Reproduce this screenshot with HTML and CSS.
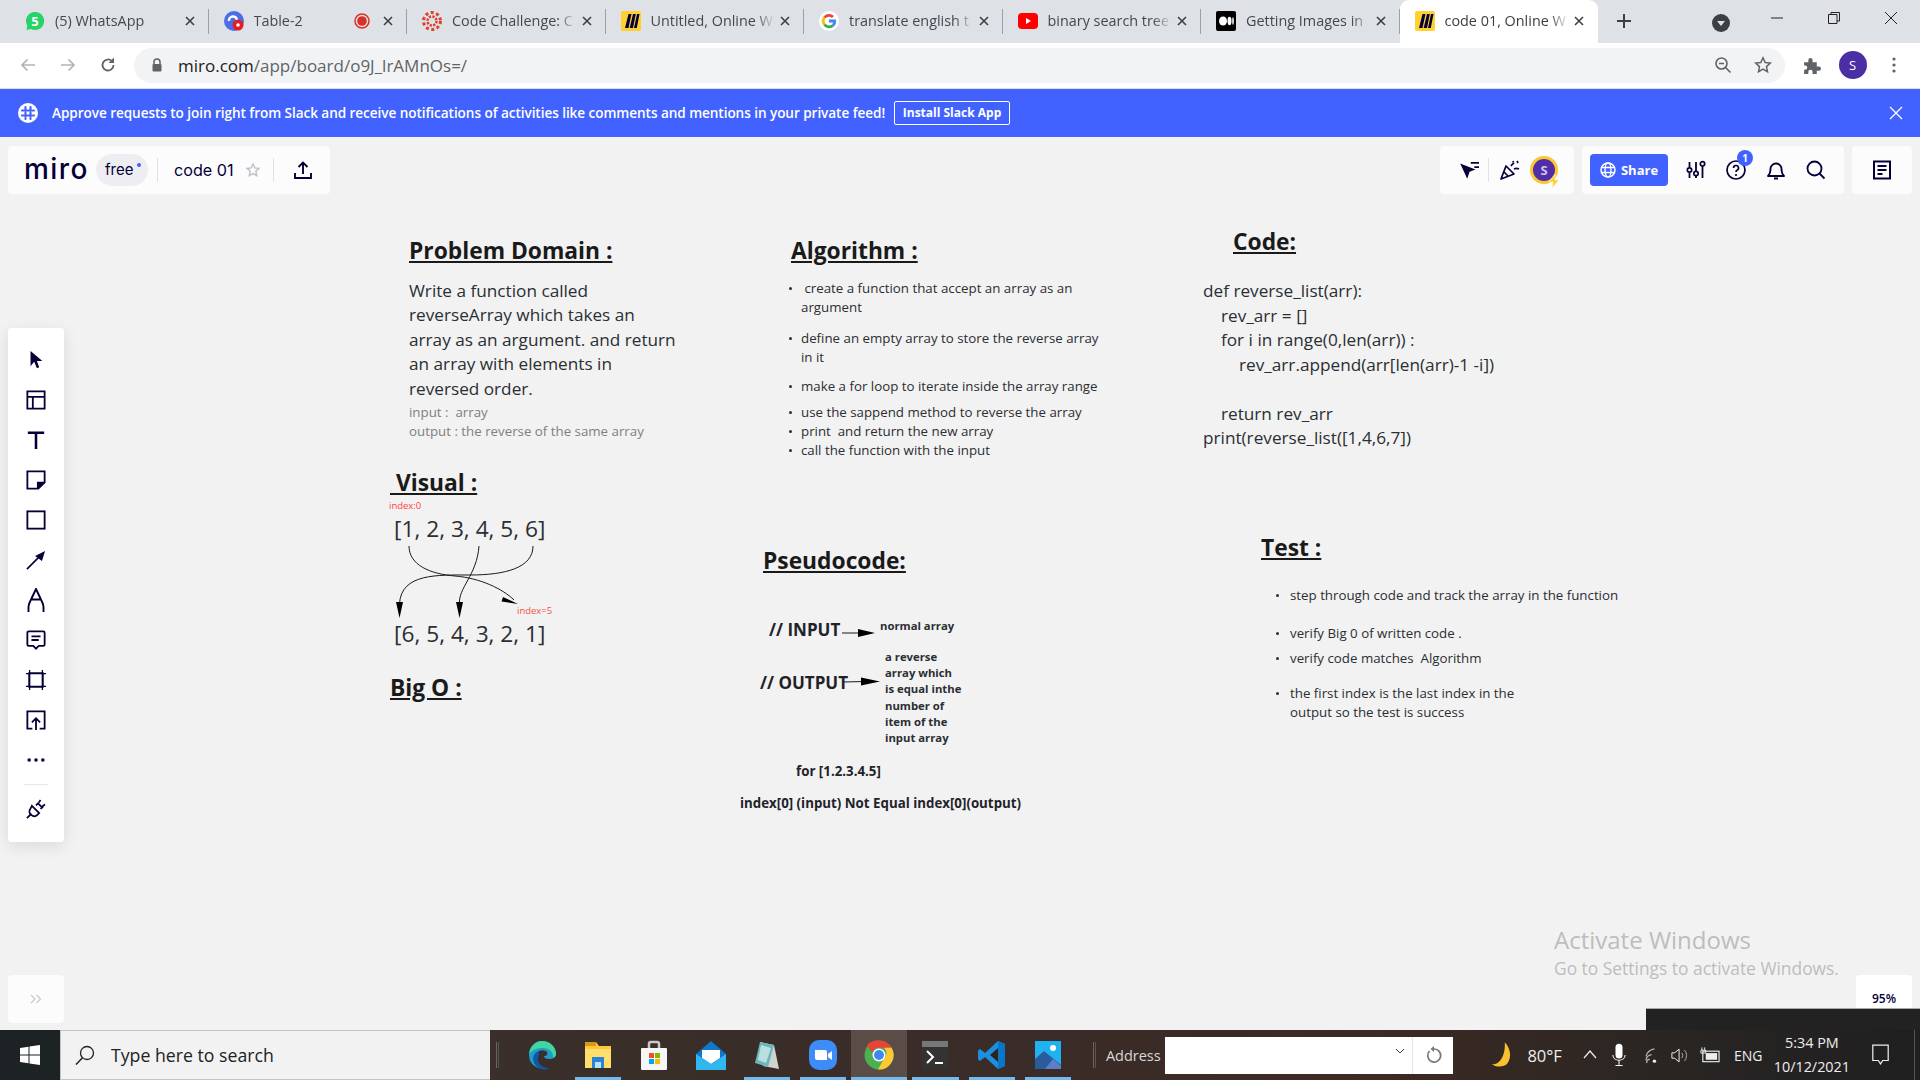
FILE: index.html
```html
<!DOCTYPE html>
<html lang="en">
<head>
<meta charset="utf-8">
<title>code 01, Online Whiteboard</title>
<link rel="stylesheet" href="styles.css">
</head>
<body>
<svg class="defs" width="0" height="0" aria-hidden="true">
  <symbol id="x" viewBox="0 0 12 12"><path d="M2 2l8 8M10 2l-8 8" fill="none" stroke="#3c4043" stroke-width="1.600"/></symbol>
  <symbol id="miro" viewBox="0 0 20 20"><rect width="20" height="20" rx="2" fill="#ffd02f"/><path d="M7.500 3h3L7.500 17H4zM12 3h2.800L12 17H8.700zM16 3h2.500L15.800 17h-2.800z" fill="#050038"/></symbol>
</svg>

<div class="page">
  <header class="tabstrip">
    <div class="tab">
      <svg class="favicon" viewBox="0 0 20 20"><path d="M10 1a9 9 0 0 0-7.700 13.600L1.500 19l4.500-1A9 9 0 1 0 10 1z" fill="#25d366"/><text x="10" y="14.500" text-anchor="middle" class="fav5">5</text></svg>
      <span class="tab-title">(5) WhatsApp</span>
      <svg class="tab-x"><use href="#x"/></svg>
    </div>
    <div class="tab">
      <svg class="favicon" viewBox="0 0 20 20"><circle cx="10" cy="10" r="10" fill="#4b6ee8"/><path d="M5 10a4 4 0 0 1 8-1" fill="none" stroke="#fff" stroke-width="2.500"/><circle cx="14" cy="14" r="5.500" fill="#e51c23"/><circle cx="14" cy="14" r="1.800" fill="#fff"/></svg>
      <span class="tab-title">Table-2</span>
      <svg class="tab-rec" viewBox="0 0 16 16"><circle cx="8" cy="8" r="7" fill="none" stroke="#d93025" stroke-width="1.500"/><circle cx="8" cy="8" r="4.800" fill="#d93025"/></svg>
      <svg class="tab-x"><use href="#x"/></svg>
    </div>
    <div class="tab">
      <svg class="favicon" viewBox="0 0 20 20"><circle cx="10" cy="10" r="4.500" fill="none" stroke="#e13f2b" stroke-width="2.500" stroke-dasharray="2.200 1.300"/><circle cx="10" cy="10" r="8.500" fill="none" stroke="#e13f2b" stroke-width="3" stroke-dasharray="3 2.500"/></svg>
      <span class="tab-title">Code Challenge: C</span>
      <svg class="tab-x"><use href="#x"/></svg>
    </div>
    <div class="tab">
      <svg class="favicon"><use href="#miro"/></svg>
      <span class="tab-title">Untitled, Online W</span>
      <svg class="tab-x"><use href="#x"/></svg>
    </div>
    <div class="tab">
      <svg class="favicon" viewBox="0 0 20 20"><circle cx="10" cy="10" r="10" fill="#fff"/><path d="M5.500 6.500A5.700 5.700 0 0 1 14 6" fill="none" stroke="#ea4335" stroke-width="2.800"/><path d="M5.500 6.500a5.700 5.700 0 0 0 0 7" fill="none" stroke="#fbbc05" stroke-width="2.800"/><path d="M5.500 13.500A5.700 5.700 0 0 0 14 14.500" fill="none" stroke="#34a853" stroke-width="2.800"/><path d="M10 10h5.700A5.700 5.700 0 0 1 14 14.500" fill="none" stroke="#4285f4" stroke-width="2.800"/></svg>
      <span class="tab-title">translate english t</span>
      <svg class="tab-x"><use href="#x"/></svg>
    </div>
    <div class="tab">
      <svg class="favicon" viewBox="0 0 20 20"><rect y="2" width="20" height="16" rx="4" fill="#f00"/><path d="M8 7l5 3-5 3z" fill="#fff"/></svg>
      <span class="tab-title">binary search tree</span>
      <svg class="tab-x"><use href="#x"/></svg>
    </div>
    <div class="tab">
      <svg class="favicon" viewBox="0 0 20 20"><rect width="20" height="20" rx="2" fill="#000"/><ellipse cx="7" cy="10" rx="4" ry="4.500" fill="#fff"/><ellipse cx="13.500" cy="10" rx="2" ry="4.200" fill="#fff"/><ellipse cx="17" cy="10" rx=".8" ry="3.800" fill="#fff"/></svg>
      <span class="tab-title">Getting Images in</span>
      <svg class="tab-x"><use href="#x"/></svg>
    </div>
    <div class="tab tab-active">
      <svg class="favicon"><use href="#miro"/></svg>
      <span class="tab-title">code 01, Online W</span>
      <svg class="tab-x"><use href="#x"/></svg>
    </div>
    <svg class="newtab" viewBox="0 0 16 16"><path d="M8 1v14M1 8h14" stroke="#3c4043" stroke-width="2"/></svg>
    <div class="winctl">
      <svg class="tabsearch" viewBox="0 0 18 18"><circle cx="9" cy="9" r="9" fill="#3c4043"/><path d="M5 7h8l-4 5z" fill="#dee1e6"/></svg>
      <svg class="wc" viewBox="0 0 14 14"><path d="M1 7h12" stroke="#222" stroke-width="1"/></svg>
      <svg class="wc" viewBox="0 0 14 14"><path d="M1.500 3.500h8.500v9H1.500zM4 3.500V1.500h8.500v8.500H10" fill="none" stroke="#222" stroke-width="1"/></svg>
      <svg class="wc" viewBox="0 0 14 14"><path d="M1 1l12 12M13 1L1 13" stroke="#222" stroke-width="1"/></svg>
    </div>
  </header>

  <nav class="toolbar">
    <svg class="nav-ico" viewBox="0 0 18 18"><path d="M16 9H3M8.500 3.500L3 9l5.500 5.500" fill="none" stroke="#b0b3b8" stroke-width="1.700"/></svg>
    <svg class="nav-ico" viewBox="0 0 18 18"><path d="M2 9h13M9.500 3.500L15 9l-5.500 5.500" fill="none" stroke="#b0b3b8" stroke-width="1.700"/></svg>
    <svg class="nav-ico" viewBox="0 0 18 18"><path d="M14.500 9a5.500 5.500 0 1 1-1.600-3.900" fill="none" stroke="#5f6368" stroke-width="1.800"/><path d="M15 1.500V7H9.500z" fill="#5f6368"/></svg>
    <div class="omnibox">
      <svg class="lock" viewBox="0 0 12 14"><path d="M3 6V4a3 3 0 0 1 6 0v2" fill="none" stroke="#5f6368" stroke-width="1.500"/><rect x="1.500" y="6" width="9" height="7.500" rx="1" fill="#5f6368"/></svg>
      <span class="url">miro.com<span class="url-dim">/app/board/o9J_lrAMnOs=/</span></span>
      <svg class="omni-ico" viewBox="0 0 18 18"><circle cx="7.500" cy="7.500" r="5.500" fill="none" stroke="#5f6368" stroke-width="1.600"/><path d="M5 7.500h5M11.500 11.500l5 5" stroke="#5f6368" stroke-width="1.600"/></svg>
      <svg class="omni-ico" viewBox="0 0 18 18"><path d="M9 1.800l2.200 4.700 5.100.6-3.800 3.500 1 5.100L9 13.200l-4.500 2.500 1-5.100L1.700 7.100l5.100-.6z" fill="none" stroke="#5f6368" stroke-width="1.500"/></svg>
    </div>
    <svg class="puzzle" viewBox="0 0 18 18"><path d="M2 6h4V4a2 2 0 0 1 4 0v2h4v4h2a2 2 0 0 1 0 4h-2v3H10v-2a2 2 0 0 0-4 0v2H2v-4h1a2 2 0 0 0 0-4H2z" fill="#5f6368"/></svg>
    <span class="chrome-avatar">S</span>
    <svg class="kebab" viewBox="0 0 4 16"><circle cx="2" cy="2" r="1.600" fill="#5f6368"/><circle cx="2" cy="8" r="1.600" fill="#5f6368"/><circle cx="2" cy="14" r="1.600" fill="#5f6368"/></svg>
  </nav>

  <div class="banner">
    <svg class="slack" viewBox="0 0 20 20"><circle cx="10" cy="10" r="10" fill="#fff"/><path d="M7.500 4v12M12.500 4v12M4 7.500h12M4 12.500h12" stroke="#4262ff" stroke-width="2.200" stroke-linecap="round" stroke-dasharray="4 1.500"/></svg>
    <span class="banner-text">Approve requests to join right from Slack and receive notifications of activities like comments and mentions in your private feed!</span>
    <span class="banner-btn">Install Slack App</span>
    <svg class="banner-x" viewBox="0 0 14 14"><path d="M1 1l12 12M13 1L1 13" stroke="#fff" stroke-width="1.300"/></svg>
  </div>

  <main class="board">
    <section class="note n-problem">
      <h2 class="h">Problem Domain :</h2>
      <p class="big">Write a function called<br>reverseArray which takes an<br>array as an argument. and return<br>an array with elements in<br>reversed order.</p>
      <p class="muted">input :&nbsp; array<br>output : the reverse of the same array</p>
    </section>

    <h2 class="note h n-visual">&nbsp;Visual :</h2>
    <span class="note red n-i0">index:0</span>
    <span class="note arr n-a1">[1, 2, 3, 4, 5, 6]</span>
    <span class="note arr n-a2">[6, 5, 4, 3, 2, 1]</span>
    <span class="note red n-i5">index=5</span>
    <h2 class="note h n-bigo">Big O :</h2>

    <svg class="connectors" viewBox="0 137 1920 893">
      <g fill="none" stroke="#1a1a1a" stroke-width="1">
        <path d="M409 546C409 565 430 574 455 576C480 578 503 589 514 600"/>
        <path d="M533 546C533 568 505 575 470 575C438 575 401 573 399.500 604"/>
        <path d="M479 546C477 575 458 588 459.500 604"/>
        <path d="M842 633H862"/>
        <path d="M843 682L865 681.500"/>
      </g>
      <g fill="#000">
        <path d="M396 602h7l-3.500 16z"/>
        <path d="M456 602h7l-3.500 16z"/>
        <path d="M518 604l-15-7-1.500 4.500z"/>
        <path d="M858 629l17 4-17 4z"/>
        <path d="M861 677.500l19 4-19 4z"/>
      </g>
    </svg>

    <section class="note n-algo">
      <h2 class="h">Algorithm :</h2>
      <ul class="bul">
        <li>&nbsp;create a function that accept an array as an argument</li>
        <li class="g12">define an empty array to store the reverse array in it</li>
        <li class="g10">make a for loop to iterate inside the array range</li>
        <li class="g7">use the sappend method to reverse the array</li>
        <li>print &nbsp;and return the new array</li>
        <li>call the function with the input</li>
      </ul>
    </section>

    <section class="note n-code">
      <h2 class="h n-code-h">Code:</h2>
      <p class="big code">def reverse_list(arr):<br><span class="i1">rev_arr = []</span><br><span class="i1">for i in range(0,len(arr)) :</span><br><span class="i2">rev_arr.append(arr[len(arr)-1 -i])</span><br><br><span class="i1">return rev_arr</span><br>print(reverse_list([1,4,6,7])</p>
    </section>

    <h2 class="note h n-pseudo">Pseudocode:</h2>
    <span class="note lbl n-in">// INPUT</span>
    <span class="note lbl n-out">// OUTPUT</span>
    <span class="note tiny n-normal">normal array</span>
    <p class="note tiny n-rev">a reverse<br>array which<br>is equal inthe<br>number of<br>item of the<br>input array</p>
    <span class="note small n-for">for [1.2.3.4.5]</span>
    <span class="note small n-index">index[0] (input) Not Equal index[0](output)</span>

    <section class="note n-test">
      <h2 class="h">Test :</h2>
      <ul class="bul test">
        <li>step through code and track the array in the function</li>
        <li class="g19">verify Big 0 of written code .</li>
        <li class="g6">verify code matches &nbsp;Algorithm</li>
        <li class="g16">the first index is the last index in the<br>output so the test is success</li>
      </ul>
    </section>

    <div class="hud-top">
      <div class="panel panel-left">
        <span class="logo">miro</span>
        <span class="free">free<i class="free-dot"></i></span>
        <i class="vsep"></i>
        <span class="boardname">code 01</span>
        <svg class="star" viewBox="0 0 14 14"><path d="M7 1l1.800 3.900 4.200.5-3.100 2.900.8 4.200L7 10.500 3.300 12.500l.8-4.200L1 5.400l4.200-.5z" fill="none" stroke="#c2c2cc" stroke-width="1.500"/></svg>
        <i class="vsep"></i>
        <svg class="export" viewBox="0 0 20 20"><path d="M10 14V2.500M5.500 7L10 2.500 14.500 7M2 13v5h16v-5" fill="none" stroke="#050038" stroke-width="1.900"/></svg>
      </div>
      <div class="hud-right">
        <div class="panel panel-collab">
          <svg class="ico20" viewBox="0 1 17 17"><path d="M1 4l13 5-5 2-2 6z" fill="#050038"/><path d="M10 3.500h7M13 7h4" stroke="#050038" stroke-width="1.500"/></svg>
          <i class="vsep vsep-c"></i>
          <svg class="ico22" viewBox="0 0 22 22"><path d="M2 20L7 7l8 8z" fill="none" stroke="#050038" stroke-width="1.700" stroke-linejoin="round"/><path d="M5 13l4 4M12 7c1-2 2-2 3-3M15 10c2-1 3-1 5 0M18 2l1 2M14 2l.5 1.500" fill="none" stroke="#050038" stroke-width="1.700"/></svg>
          <span class="collab-avatar">S<svg class="bolt" viewBox="0 0 12 14"><path d="M7 0L1 8h4l-1 6 7-8H7z" fill="#fcd02f" stroke="#fafafa" stroke-width=".6"/></svg></span>
        </div>
        <div class="panel panel-tools">
          <span class="share"><svg class="globe" viewBox="0 0 16 16"><circle cx="8" cy="8" r="7" fill="none" stroke="#fff" stroke-width="1.500"/><ellipse cx="8" cy="8" rx="3" ry="7" fill="none" stroke="#fff" stroke-width="1.300"/><path d="M1 5.500h14M1 10.500h14" stroke="#fff" stroke-width="1.300"/></svg>Share</span>
          <svg class="ico20 t1" viewBox="0 0 20 20"><path d="M3.500 2v5M3.500 13v5M10 2v9M10 16v2M16.500 6v12" stroke="#050038" stroke-width="1.800"/><circle cx="3.500" cy="10" r="2.200" fill="none" stroke="#050038" stroke-width="1.700"/><circle cx="10" cy="13.500" r="2.200" fill="none" stroke="#050038" stroke-width="1.700"/><circle cx="16.500" cy="3.800" r="2.200" fill="none" stroke="#050038" stroke-width="1.700"/></svg>
          <span class="help">
            <svg class="ico20" viewBox="0 0 20 20"><circle cx="10" cy="10" r="9" fill="none" stroke="#050038" stroke-width="1.700"/><path d="M7.500 8a2.500 2.500 0 1 1 3.500 2.300c-.7.4-1 .8-1 1.700" fill="none" stroke="#050038" stroke-width="1.700"/><circle cx="10" cy="15" r="1.100" fill="#050038"/></svg>
            <b class="badge">1</b>
          </span>
          <svg class="ico20" viewBox="0 0 20 20"><path d="M2 16c2-2 2.500-4 2.500-7a5.500 5.500 0 0 1 11 0c0 3 .5 5 2.500 7z" fill="none" stroke="#050038" stroke-width="1.800" stroke-linejoin="round"/><path d="M8 18.500h4" stroke="#050038" stroke-width="2"/></svg>
          <svg class="ico20" viewBox="0 0 20 20"><circle cx="8.500" cy="8.500" r="7" fill="none" stroke="#050038" stroke-width="1.800"/><path d="M13.500 13.500l5 5" stroke="#050038" stroke-width="1.800"/></svg>
        </div>
        <div class="panel panel-notes">
          <svg class="ico20" viewBox="0 0 20 20"><rect x="2" y="1.500" width="16" height="17" fill="none" stroke="#050038" stroke-width="2"/><path d="M5.500 6h9M5.500 10h9M5.500 14h5" stroke="#050038" stroke-width="1.800"/></svg>
        </div>
      </div>
    </div>

    <aside class="toolrail">
      <span class="tool"><svg viewBox="0 0 22 22"><path d="M5 1l13 11h-6l2.500 7-2.500 1-3-7-4 5z" fill="#050038"/></svg></span>
      <span class="tool"><svg viewBox="0 0 22 22"><path d="M1.500 1.500h19v19h-19zM1.500 7.500h19M7.500 7.500v13" fill="none" stroke="#050038" stroke-width="2"/></svg></span>
      <span class="tool"><svg viewBox="0 0 22 22"><path d="M2 3h18M11 3v18" fill="none" stroke="#050038" stroke-width="2.800"/></svg></span>
      <span class="tool"><svg viewBox="0 0 22 22"><path d="M1.500 1.500h19v12l-7 7h-12z" fill="none" stroke="#050038" stroke-width="2"/><path d="M20.500 13v1l-6.500 6.500h-2V13z" fill="#050038"/></svg></span>
      <span class="tool"><svg viewBox="0 0 22 22"><rect x="1.500" y="1.500" width="19" height="19" fill="none" stroke="#050038" stroke-width="2"/></svg></span>
      <span class="tool"><svg viewBox="0 0 22 22"><path d="M1 21L15 7" stroke="#050038" stroke-width="1.800"/><path d="M21 1l-3.500 11-7.500-5.500z" fill="#050038"/></svg></span>
      <span class="tool tool-tall"><svg viewBox="0 0 20 24"><path d="M2.500 24v-5c0-3 1.500-5 3-8.500L10 1l4.500 9.500c1.500 3.500 3 5.500 3 8.500v5M5 11.500h10" fill="none" stroke="#050038" stroke-width="1.900"/></svg></span>
      <span class="tool"><svg viewBox="0 0 22 22"><path d="M3 1.500h16a1.500 1.500 0 0 1 1.500 1.500v13a1.500 1.500 0 0 1-1.500 1.500h-5l-3 3-3-3H3A1.500 1.500 0 0 1 1.500 16V3A1.500 1.500 0 0 1 3 1.500z" fill="none" stroke="#050038" stroke-width="2"/><path d="M6 7h10M6 11h8" stroke="#050038" stroke-width="2"/></svg></span>
      <span class="tool"><svg viewBox="0 0 22 22"><path d="M3.500 3.500h15v15h-15z" fill="none" stroke="#050038" stroke-width="2"/><path d="M4 0v22M18 0v22M0 4h22M0 18h22" stroke="#050038" stroke-width="1.400"/></svg></span>
      <span class="tool"><svg viewBox="0 0 22 22"><path d="M7 20.500H1.500v-19h19v19H15M11 22V9M6.500 13.500L11 9l4.500 4.500" fill="none" stroke="#050038" stroke-width="2"/></svg></span>
      <span class="tool"><svg viewBox="0 0 22 22"><circle cx="3.500" cy="11" r="2" fill="#050038"/><circle cx="11" cy="11" r="2" fill="#050038"/><circle cx="18.500" cy="11" r="2" fill="#050038"/></svg></span>
      <i class="rail-sep"></i>
      <span class="tool"><svg viewBox="0 0 22 22"><path d="M1 21l5-5M6.500 7.500l8 8-2 2c-2 2-5 1.500-7 0s-2.500-5-.5-7zM14 4l-3 3M19 8l-3 3M13 4.500l5.500 5.500" fill="none" stroke="#050038" stroke-width="1.900"/><path d="M16 1l-2 3M21 6l-3 2" stroke="#050038" stroke-width="1.900"/></svg></span>
    </aside>

    <div class="hud-bottom">
      <span class="panel expand"><svg viewBox="0 0 12 10"><path d="M1 1l4 4-4 4M6.500 1l4 4-4 4" fill="none" stroke="#c8c8d0" stroke-width="1.200"/></svg></span>
      <span class="panel zoompct">95%</span>
    </div>

    <div class="activate">
      <span class="act1">Activate Windows</span>
      <span class="act2">Go to Settings to activate Windows.</span>
    </div>
    <div class="blackstrip"></div>
  </main>

  <footer class="taskbar">
    <div class="start"><svg viewBox="0 0 20 20"><path d="M0 3l8.500-1.200V9.500H0zM9.500 1.600L20 0v9.500H9.500zM0 10.500h8.500v7.700L0 17zM9.500 10.500H20V20L9.500 18.400z" fill="#fff"/></svg></div>
    <div class="search">
      <svg viewBox="0 0 20 20"><circle cx="12" cy="8" r="6.500" fill="none" stroke="#222" stroke-width="1.300"/><path d="M7.500 12.800L1 19.500" stroke="#222" stroke-width="1.500"/></svg>
      <span>Type here to search</span>
    </div>
    <i class="grip"></i>
    <div class="apps">
      <span class="app"><svg viewBox="0 0 30 30"><path d="M2 15C2 7 8 1 15 1c8 0 14 6 14 13 0 3-3 5-7 5-3 0-5-1-5-3 3 0 4-2 3-4-2-2-8-3-11 2-3 5 2 14 10 14C10 30 2 24 2 15z" fill="#1f9cc9"/><path d="M15 1c8 0 14 6 14 13 0 2-1 3-3 4 1-6-4-10-11-10-5 0-10 2-13 6C3 7 8 1 15 1z" fill="#41d6a0"/><path d="M12 15c-3 5 1 14 11 13C14 33 3 24 7 15c2-4 6-4 5 0z" fill="#0c59a4"/></svg></span>
      <span class="app on"><svg viewBox="0 0 30 30"><path d="M2 2h11l3 4h12v22H2z" fill="#fdc83b"/><path d="M2 2h11v4H2z" fill="#d99a12"/><path d="M2 9h26v19H2z" fill="#ffdf6b"/><rect x="9" y="17" width="12" height="11" fill="#2a83d4"/><rect x="12" y="22" width="6" height="6" fill="#b8e2fa"/></svg></span>
      <span class="app"><svg viewBox="0 0 30 30"><path d="M10 9V4a2 2 0 0 1 2-2h6a2 2 0 0 1 2 2v5" fill="none" stroke="#c9c9c9" stroke-width="2.500"/><rect x="2" y="8" width="26" height="22" rx="1" fill="#f6f6f6"/><rect x="10" y="13" width="5" height="5" fill="#f25022"/><rect x="16" y="13" width="5" height="5" fill="#7fba00"/><rect x="10" y="19" width="5" height="5" fill="#00a4ef"/><rect x="16" y="19" width="5" height="5" fill="#ffb900"/></svg></span>
      <span class="app"><svg viewBox="0 0 30 30"><path d="M15 1L30 14v16H0V14z" fill="#0f78c9"/><path d="M6 10h18v8l-9 6-9-6z" fill="#fff"/><path d="M0 14l15 10 15-10v16H0z" fill="#31b7ee"/></svg></span>
      <span class="app on"><svg viewBox="0 0 30 30"><path d="M8 2l14 3 5 24-16-3z" fill="#d0d4d0"/><path d="M8 2l14 3-6 22-13-4z" fill="#6fb5bd"/><path d="M9 5l10 3-5 15-8-3z" fill="#b9e0e0"/></svg></span>
      <span class="app on"><svg viewBox="0 0 30 30"><rect x="1" y="0" width="28" height="30" rx="10" fill="#3d8cf7"/><path d="M7 10h10a2 2 0 0 1 2 2v8H9a2 2 0 0 1-2-2z" fill="#fff"/><path d="M20 14l4-3v9l-4-3z" fill="#fff"/></svg></span>
      <span class="app on app-active"><svg viewBox="0 0 30 30"><circle cx="15" cy="15" r="14.500" fill="#4caf50"/><path d="M15 .5a14.500 14.500 0 0 1 12.600 7.200H15a7 7 0 0 0-7 5L3 5A14.500 14.500 0 0 1 15 .5z" fill="#ea4335"/><path d="M27.600 7.700A14.500 14.500 0 0 1 14 29.500l6-11a7 7 0 0 0 0-10.800z" fill="#fcc934"/><circle cx="15" cy="15" r="6.500" fill="#fff"/><circle cx="15" cy="15" r="5" fill="#4285f4"/></svg></span>
      <span class="app on"><svg viewBox="0 0 30 30"><rect x="2" y="1" width="26" height="28" rx="2" fill="#333"/><rect x="2" y="1" width="26" height="6" fill="#777"/><path d="M7 11l6 6-6 6" fill="none" stroke="#fff" stroke-width="2"/><path d="M15 23h8" stroke="#fff" stroke-width="2"/></svg></span>
      <span class="app on"><svg viewBox="0 0 30 30"><path d="M21 1l7 3v22l-7 3L8 17l-5 4-2-1.500v-9L3 9l5 4z" fill="#1c8fe1"/><path d="M21 8l-8 7 8 7z" fill="#2c2320"/><path d="M21 1l7 3v22l-7 3z" fill="#0b76c8"/></svg></span>
      <span class="app on"><svg viewBox="0 0 30 30"><rect x="2" y="1" width="26" height="28" fill="#1fb2f1"/><circle cx="20" cy="8" r="3" fill="#fff"/><path d="M2 29V19l9-8 17 14v4z" fill="#2b5b9c"/><path d="M12 29l8-10 8 7v3z" fill="#5e7fc7"/></svg></span>
    </div>
    <i class="grip grip-addr"></i>
    <span class="addr-label">Address</span>
    <div class="addr">
      <svg class="addr-chev" viewBox="0 0 10 6"><path d="M1 1l4 4 4-4" fill="none" stroke="#444" stroke-width="1"/></svg>
      <i class="addr-sep"></i>
      <svg class="addr-refresh" viewBox="0 0 18 18"><path d="M9 3a6.500 6.500 0 1 1-4.500 2" fill="none" stroke="#777" stroke-width="1.700"/><path d="M9 0v6L5.500 3z" fill="#777"/></svg>
    </div>
    <svg class="moon" viewBox="0 0 24 30"><path d="M15 1c6 6 8 16 3 23-3 4-12 5-17 1 10 1 15-12 14-24z" fill="#fbc02d"/></svg>
    <span class="temp">80°F</span>
    <svg class="tray t-up" viewBox="0 0 16 16"><path d="M2 11l6-7 6 7" fill="none" stroke="#eee" stroke-width="1.200"/></svg>
    <svg class="tray t-mic" viewBox="0 0 16 26"><rect x="4" y="0" width="8" height="17" rx="4" fill="#fff"/><path d="M1 13c0 8 14 8 14 0M8 19v5M4 25h8" fill="none" stroke="#fff" stroke-width="1.200"/></svg>
    <svg class="tray t-wifi" viewBox="0 0 18 18"><path d="M1 10a11 11 0 0 1 9-8M1 14a7 7 0 0 1 6-6M2 17a3 3 0 0 1 3-4" fill="none" stroke="#bbb" stroke-width="1.300"/><circle cx="10" cy="15" r="1.800" fill="#eee"/></svg>
    <svg class="tray t-vol" viewBox="0 0 20 18"><path d="M1 6h3l5-4v14l-5-4H1z" fill="none" stroke="#eee" stroke-width="1.100"/><path d="M12 6a5 5 0 0 1 0 6M15 3a9 9 0 0 1 0 12" fill="none" stroke="#aaa" stroke-width="1.100"/></svg>
    <svg class="tray t-bat" viewBox="0 0 22 18"><path d="M3 1v3M6 1v3M2 4h5v3H2z" stroke="#eee" fill="none"/><rect x="4" y="5" width="17" height="11" fill="none" stroke="#eee" stroke-width="1.200"/><rect x="7" y="7" width="12" height="7" fill="#eee"/></svg>
    <span class="eng">ENG</span>
    <span class="clock">5:34 PM<br>10/12/2021</span>
    <svg class="notif" viewBox="0 0 16 20"><path d="M1 1h14v14h-5l-2 3-2-3H1z" fill="none" stroke="#eee" stroke-width="1.100"/></svg>
    <i class="tb-end"></i>
  </footer>
</div>
</body>
</html>
```

FILE: styles.css
```css
* { box-sizing: border-box; }
html, body { margin: 0; height: 100%; }
body { font-family: "Open Sans", "Noto Sans", sans-serif; background: #f2f2f2; overflow: hidden; }
.defs { position: absolute; }
svg { display: block; flex: none; }
i { display: block; font-style: normal; }

.page { width: 1920px; height: 1080px; display: flex; flex-direction: column; }

/* tabs */
.tabstrip { height: 43px; flex: none; background: #dee1e6; display: flex; align-items: stretch; padding-left: 10px; }
.tab { width: 198.5px; flex: none; display: flex; align-items: center; padding: 0 10px 2px 15px; position: relative; font-size: 14.4px; color: #45494e; }
.tab::after { content: ""; position: absolute; right: 0; top: 9px; height: 25px; width: 1px; background: #9aa0a6; }
.favicon { width: 20px; height: 20px; margin-right: 10px; }
.fav5 { font-size: 13px; font-weight: 700; fill: #fff; }
.tab-title { flex: 1; min-width: 0; white-space: nowrap; overflow: hidden; -webkit-mask-image: linear-gradient(90deg, #000 84%, transparent 99%); mask-image: linear-gradient(90deg, #000 84%, transparent 99%); }
.tab-x { width: 12px; height: 12px; margin: 0 3px 0 3px; }
.tab-rec { width: 16px; height: 16px; margin-left: -20px; margin-right: 9px; position: relative; }
.tab-active { background: #fff; border-radius: 9px 9px 0 0; color: #3c4043; }
.tab-active::after { display: none; }
.newtab { width: 16px; height: 16px; margin: 13px 0 0 18px; }
.winctl { margin-left: auto; display: flex; align-items: center; padding-bottom: 3px; }
.tabsearch { width: 18px; height: 18px; margin-right: 40px; margin-top: 5px; }
.wc { width: 14px; height: 14px; margin-right: 43px; margin-top: -4px; }
.wc:last-child { margin-right: 22px; }

/* toolbar */
.toolbar { height: 46px; flex: none; background: #fff; border-bottom: 1px solid #dcdcdc; display: flex; align-items: center; padding: 0 0 1px 19px; }
.nav-ico { width: 18px; height: 18px; margin-right: 22px; }
.omnibox { width: 1650.5px; height: 35px; margin-left: -5px; border-radius: 18px; background: #f1f3f4; display: flex; align-items: center; padding-left: 17px; }
.lock { width: 12px; height: 14px; margin-right: 15px; }
.url { font-size: 17px; color: #202124; flex: 1; }
.url-dim { color: #5f6368; }
.omni-ico { width: 18px; height: 18px; margin-right: 22px; }
.omni-ico:last-child { margin-right: 13px; }
.puzzle { width: 19px; height: 19px; margin-left: 17.500px; }
.chrome-avatar { width: 28px; height: 28px; border-radius: 50%; background: #4c2ea4; color: #fff; font-size: 13px; display: flex; align-items: center; justify-content: center; margin-left: 17.500px; }
.kebab { width: 4px; height: 16px; margin-left: 25px; }

/* banner */
.banner { height: 48px; flex: none; background: #4262ff; display: flex; align-items: center; padding-left: 18px; color: #fff; }
.slack { width: 20px; height: 20px; margin-right: 14px; }
.banner-text { font-size: 13.6px; font-weight: 600; letter-spacing: -.07px; white-space: nowrap; width: 842px; margin-top: -2px; }
.banner-btn { width: 116px; height: 24px; border: 1px solid #fff; border-radius: 2px; font-size: 12px; font-weight: 700; display: flex; align-items: center; justify-content: center; padding-bottom: 1px; }
.banner-x { width: 14px; height: 14px; margin-left: 879px; }

/* board */
.board { flex: 1; min-height: 0; position: relative; background: #f2f2f2; display: flex; flex-direction: column; padding: 9px 8px 7px; color: #1f2329; }
.note { position: absolute; margin: 0; white-space: nowrap; }
.h { margin: 0; padding-top: 1px; font-size: 22.8px; line-height: 30px; font-weight: 700; text-decoration: underline; text-decoration-thickness: 2px; text-underline-offset: 2px; color: #1a1a1a; }
.big { margin: 0; font-size: 17.2px; line-height: 24.4px; color: #2b2e33; }
.muted { margin: 0; font-size: 13.3px; line-height: 19px; color: #808080; }
.connectors { position: absolute; left: 0; top: 0; width: 1920px; height: 893px; pointer-events: none; }

.n-problem { left: 409px; top: 98px; }
.n-problem .big { margin-top: 13px; }
.n-problem .muted { margin-top: 2px; }
.n-visual { left: 390px; top: 330px; }
.n-i0 { left: 389px; top: 363px; }
.red { font-size: 9.5px; line-height: 12px; color: #f44; }
.arr { font-size: 22.7px; line-height: 30px; color: #2b2e33; left: 394px; }
.n-a1 { top: 377px; }
.n-a2 { top: 482px; }
.n-i5 { left: 517px; top: 468px; color: #f4543c; }
.n-bigo { left: 390px; top: 535px; }

.n-algo { left: 790px; top: 98px; width: 312px; white-space: normal; }
.n-algo .h { margin-left: 1px; }
.bul { list-style: none; margin: 13px 0 0; padding: 0 0 0 11px; font-size: 13.3px; line-height: 19px; color: #2b2e33; }
.bul li { position: relative; }
.bul li::before { content: ""; position: absolute; left: -12.500px; top: 8px; width: 3px; height: 3px; border-radius: 50%; background: #2b2e33; }
.g12 { margin-top: 12px; }
.g10 { margin-top: 10px; }
.g7 { margin-top: 7px; }
.g19 { margin-top: 19px; }
.g6 { margin-top: 6px; }
.g16 { margin-top: 16px; }

.n-code { left: 1203px; top: 89px; }
.n-code-h { margin-left: 30px; }
.code { margin-top: 22px; line-height: 24.5px; }
.i1 { margin-left: 18px; }
.i2 { margin-left: 36px; }

.n-pseudo { left: 763px; top: 408px; }
.lbl { font-size: 17px; line-height: 22px; font-weight: 700; color: #1f2329; }
.n-in { left: 769px; top: 482px; }
.n-out { left: 760px; top: 535px; }
.tiny { font-size: 11.3px; line-height: 16.2px; font-weight: 700; color: #2b2e33; }
.n-normal { left: 880px; top: 481px; }
.n-rev { left: 885px; top: 512px; }
.small { font-size: 13.3px; line-height: 18px; font-weight: 700; color: #1f2329; }
.n-for { left: 796px; top: 625px; }
.n-index { left: 740px; top: 657px; }

.n-test { left: 1261px; top: 395px; }
.test { margin: 23px 0 0 16px; padding-left: 13px; }
.test li::before { left: -14.500px; }

/* hud */
.hud-top { display: flex; justify-content: space-between; position: relative; }
.panel { background: #fcfcfc; border-radius: 4px; height: 48px; display: flex; align-items: center; flex: none; }
.panel-left { width: 322px; padding-left: 16px; }
.logo { font-family: "Inter", sans-serif; font-weight: 500; font-size: 28px; letter-spacing: 1.4px; line-height: 30px; color: #050038; width: 72px; margin-top: -2px; }
.free { width: 52px; height: 32px; border-radius: 16px; background: #eeeef2; font-family: "Inter", sans-serif; font-size: 15px; color: #050038; display: flex; align-items: center; padding-left: 9px; position: relative; margin-top: -1px; }
.free-dot { position: absolute; left: 41px; top: 9px; width: 4px; height: 4px; border-radius: 50%; background: #4262ff; }
.vsep { width: 1px; height: 24px; background: #e1e0e7; margin-left: 9px; }
.boardname { font-family: "Inter", sans-serif; font-size: 16.2px; color: #050038; margin-left: 16px; width: 72px; white-space: nowrap; }
.star { width: 14px; height: 14px; }
.panel-left .vsep:last-of-type { margin-left: 13px; }
.export { width: 20px; height: 20px; margin-left: 19px; }

.hud-right { display: flex; gap: 8px; }
.panel-collab { width: 134px; padding-left: 19px; }
.ico20 { width: 20px; height: 20px; }
.ico22 { width: 22px; height: 22px; margin-left: 10px; }
.vsep-c { height: 24px; margin-left: 9px; }
.collab-avatar { position: relative; width: 28px; height: 28px; margin-left: 9px; border-radius: 50%; background: #4f2ea8; border: 3px solid #fcc72e; color: #cfc4ee; font-size: 13px; font-weight: 700; display: flex; align-items: center; justify-content: center; }
.bolt { position: absolute; left: 15px; top: 15px; width: 12px; height: 14px; }
.panel-tools { width: 262px; padding-left: 8px; gap: 20px; }
.share { width: 78px; height: 32px; border-radius: 4px; background: #4262ff; color: #fff; font-size: 13px; font-weight: 700; display: flex; align-items: center; justify-content: center; gap: 5px; }
.globe { width: 16px; height: 16px; }
.t1 { margin-left: -2px; }
.help { position: relative; display: block; }
.badge { position: absolute; left: 11px; top: -10px; width: 16px; height: 16px; border-radius: 50%; background: #4262ff; color: #fff; font-size: 10px; line-height: 16px; text-align: center; }
.panel-notes { width: 60px; justify-content: center; }

.toolrail { width: 56px; height: 514px; margin-top: 134px; background: #fff; border-radius: 4px; box-shadow: 0 4px 16px rgba(5,0,56,.1); padding-top: 12px; display: flex; flex-direction: column; align-items: center; position: relative; flex: none; }
.tool { height: 40px; width: 100%; display: flex; align-items: center; justify-content: center; flex: none; }
.tool svg { width: 20px; height: 20px; }
.tool-tall svg { height: 24px; }
.rail-sep { width: 24px; height: 1px; background: #e8e8ec; margin: 4px 0; flex: none; }

.hud-bottom { margin-top: auto; display: flex; justify-content: space-between; position: relative; }
.expand { width: 56px; justify-content: center; }
.expand svg { width: 12px; height: 10px; }
.zoompct { width: 56px; justify-content: center; font-size: 12px; font-weight: 600; color: #050038; background: #fff; padding-bottom: 2px; }

.activate { position: absolute; left: 1554px; top: 788px; display: flex; flex-direction: column; color: #bdbdbd; white-space: nowrap; }
.act1 { font-size: 24px; line-height: 30px; }
.act2 { font-size: 17.4px; line-height: 27px; }
.blackstrip { position: absolute; right: 0; bottom: 0; width: 274px; height: 22px; background: #222; border-top: 1px solid #a8a8a8; }

/* taskbar */
.taskbar { height: 50px; flex: none; display: flex; align-items: center; color: #eee; background: linear-gradient(90deg, #1d2224 0, #1d2224 60px, #3a2f2a 25%, #3a2b27 60%, #3c2a24 72%, #282523 88%, #201f20 100%); position: relative; }
.start { width: 60px; height: 50px; display: flex; align-items: center; justify-content: center; }
.start svg { width: 20px; height: 20px; }
.search { width: 430px; height: 50px; background: #f2f2f2; border: 1px solid #c4c4c4; border-right: 0; display: flex; align-items: center; padding-left: 14px; color: #222; font-size: 17.7px; }
.search svg { width: 20px; height: 20px; margin-right: 16px; }
.grip { width: 3px; height: 26px; border-left: 1px solid #666; border-right: 1px solid #555; margin-left: 6px; }
.apps { display: flex; margin-left: 15px; height: 50px; }
.app { width: 56.2px; height: 50px; display: flex; align-items: center; justify-content: center; position: relative; }
.app svg { width: 30px; height: 30px; }
.app.on::after { content: ""; position: absolute; left: 5px; right: 5px; bottom: 0; height: 3px; background: #76b9ed; }
.app-active { background: #5a4d48; }
.app-active.on::after { left: 0; right: 0; }
.grip-addr { margin-left: 17px; }
.addr-label { font-size: 14.5px; margin-left: 10px; color: #d8d8d8; width: 59px; }
.addr { width: 288px; height: 37px; background: #fff; display: flex; align-items: center; justify-content: flex-end; }
.addr-chev { width: 10px; height: 6px; margin-top: -8px; }
.addr-sep { width: 1px; height: 37px; background: #e5e5e5; margin-left: 7px; }
.addr-refresh { width: 18px; height: 18px; margin: 0 10px 0 12px; }
.moon { width: 22px; height: 28px; margin-left: 38px; }
.temp { font-size: 16.5px; margin-left: 14.500px; width: 36px; white-space: nowrap; }
.tray { flex: none; }
.t-up { width: 16px; height: 16px; margin-left: 19px; }
.t-mic { width: 14px; height: 26px; margin-left: 14px; }
.t-wifi { width: 17px; height: 17px; margin-left: 18.500px; }
.t-vol { width: 18px; height: 17px; margin-left: 9px; }
.t-bat { width: 21px; height: 18px; margin-left: 10px; }
.eng { font-size: 14px; margin-left: 14px; width: 38px; }
.clock { font-size: 14.4px; line-height: 24px; text-align: center; width: 80px; color: #eee; white-space: nowrap; }
.notif { width: 19px; height: 22px; margin-left: 19px; }
.tb-end { width: 1px; height: 50px; background: #555; margin-left: 24px; }
```
